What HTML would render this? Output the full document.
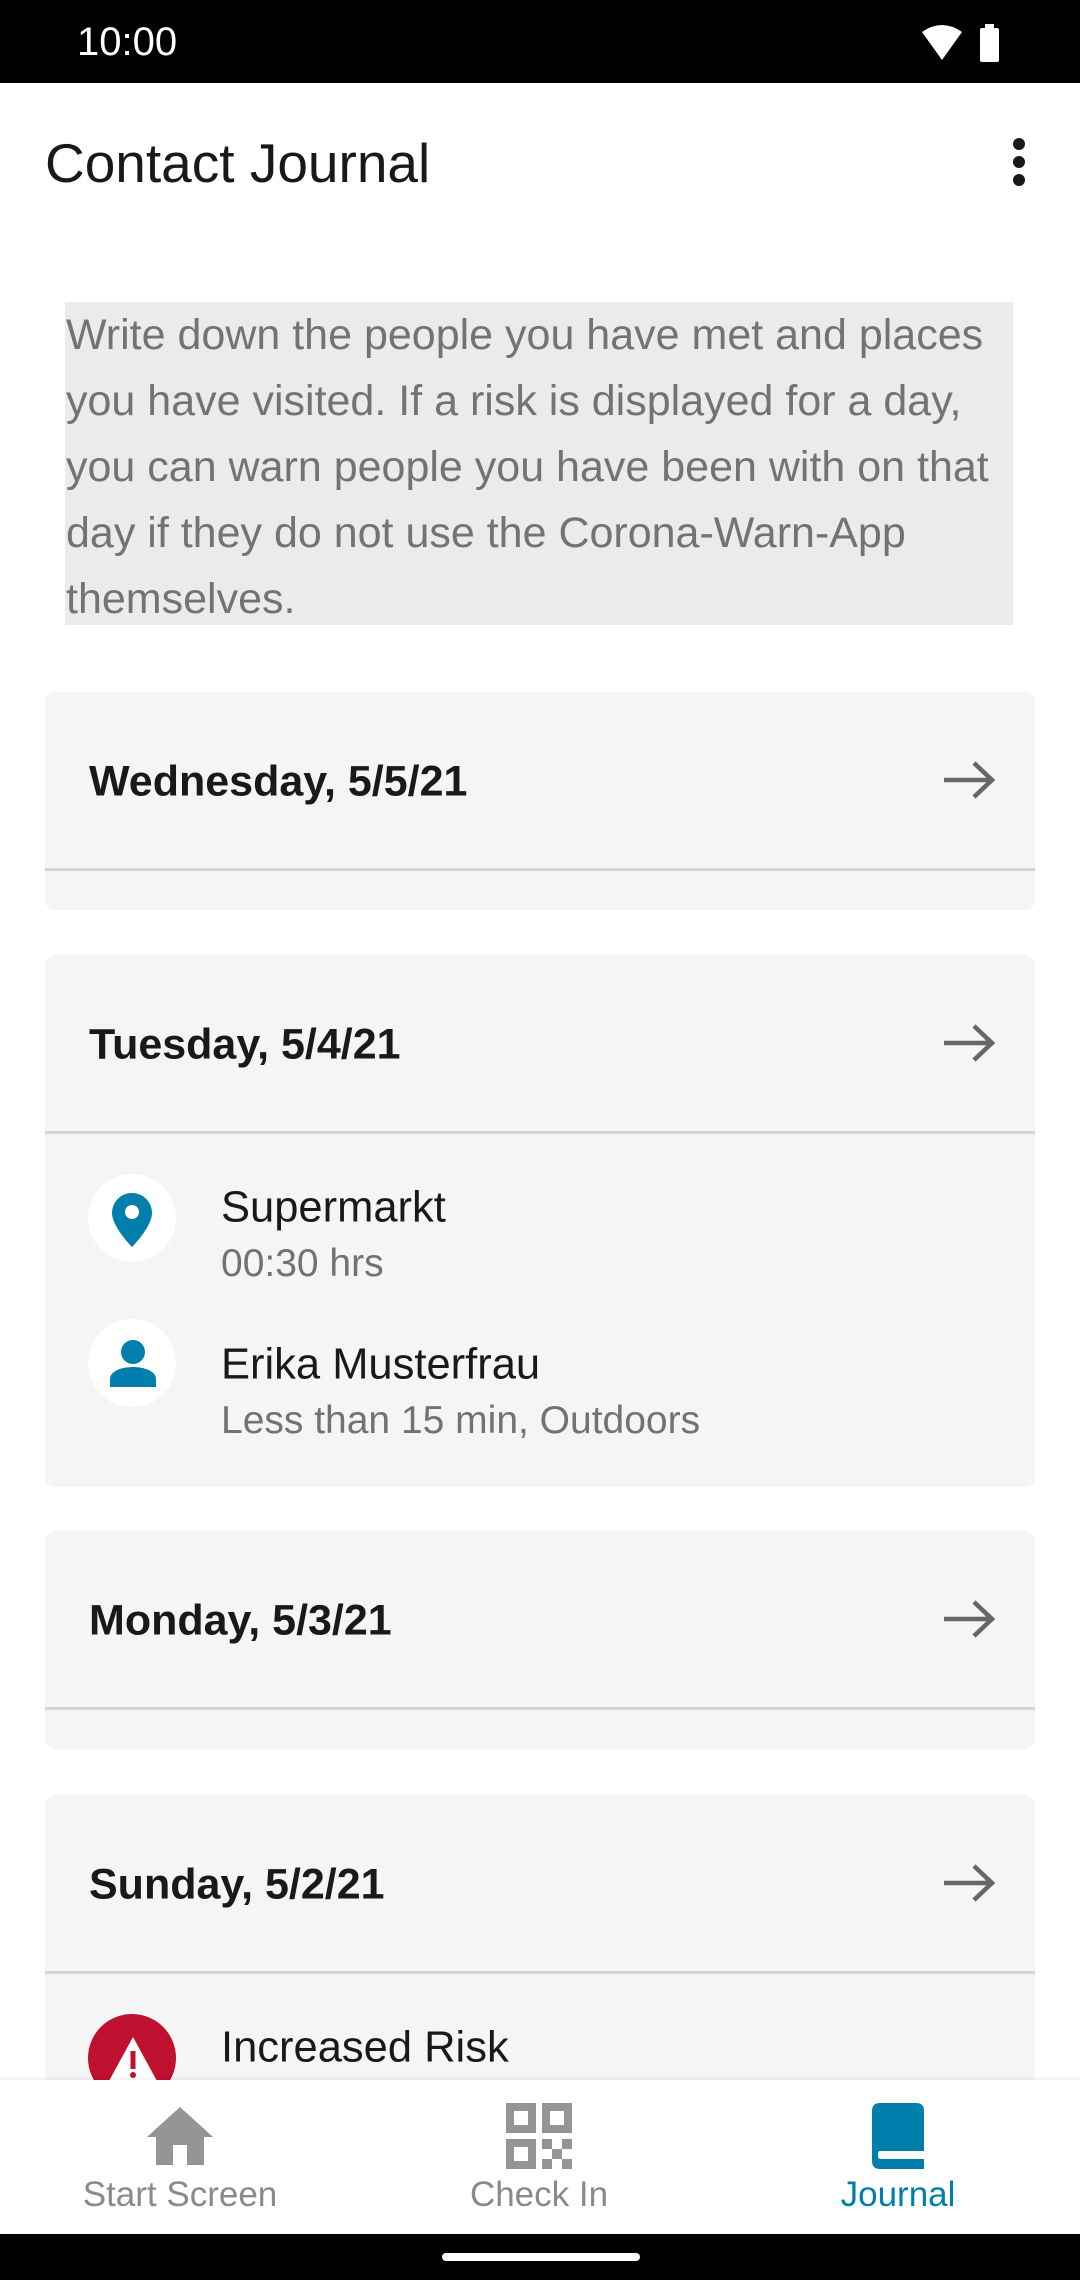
<!DOCTYPE html>
<html><head><meta charset="utf-8"><style>
*{margin:0;padding:0;box-sizing:border-box}
body{width:1080px;height:2280px;position:relative;overflow:hidden;background:#fff;font-family:"Liberation Sans",sans-serif;color:#17191a}
.a{position:absolute}
.card{position:absolute;left:45px;width:990px;background:#f5f5f5;border-radius:10px}
.hd{position:absolute;left:44px;font-weight:bold;font-size:43px;transform:translateY(-50%);white-space:nowrap}
.div{position:absolute;left:0;width:990px;height:3px;background:#d5d5d5}
.arr{position:absolute;left:897px;transform:translateY(-50%)}
.ic{position:absolute;left:43px;width:88px;height:88px;border-radius:50%;background:#fff}
.t1{position:absolute;left:176px;font-size:43.5px;transform:translateY(-50%);white-space:nowrap}
.t2{position:absolute;left:176px;font-size:39px;color:#727272;transform:translateY(-50%);white-space:nowrap}
.lab{position:absolute;font-size:35px;color:#8a8a8a;transform:translate(-50%,-50%);white-space:nowrap}
</style></head><body>
<div class="a" style="left:0;top:0;width:1080px;height:83px;background:#000"></div>
<div class="a" style="left:77px;top:20px;color:#fff;font-size:40px">10:00</div>
<svg class="a" style="left:922px;top:24px" width="80" height="40" viewBox="0 0 80 40"><path d="M0 8 Q20 -6 40 8 L20 36 Z" fill="#fff"/><rect x="58" y="4" width="19" height="34" rx="2" fill="#fff"/><rect x="63" y="0" width="9" height="6" fill="#fff"/></svg>
<div class="a" style="left:45px;top:131px;font-size:55px">Contact Journal</div>
<svg class="a" style="left:1008px;top:136px" width="22" height="52"><circle cx="11" cy="8" r="6" fill="#17191a"/><circle cx="11" cy="26" r="6" fill="#17191a"/><circle cx="11" cy="44" r="6" fill="#17191a"/></svg>
<div class="a" style="left:65px;top:302px;width:948px;height:323px;background:#ebebeb"></div>
<div class="a" style="left:66px;top:302px;width:1000px;font-size:43px;line-height:66px;color:#737373;white-space:nowrap">Write down the people you have met and places<br>you have visited. If a risk is displayed for a day,<br>you can warn people you have been with on that<br>day if they do not use the Corona-Warn-App<br>themselves.</div>

<div class="card" style="top:692px;height:218px">
<div class="hd" style="top:90px">Wednesday, 5/5/21</div>
<svg class="arr" style="top:88px" width="54" height="40" viewBox="0 0 54 40"><path d="M2 20H50M32 3L50 20L32 37" stroke="#666" stroke-width="4.5" fill="none"/></svg>
<div class="div" style="top:176px"></div></div>

<div class="card" style="top:955px;height:532px">
<div class="hd" style="top:90px">Tuesday, 5/4/21</div>
<svg class="arr" style="top:88px" width="54" height="40" viewBox="0 0 54 40"><path d="M2 20H50M32 3L50 20L32 37" stroke="#666" stroke-width="4.5" fill="none"/></svg>
<div class="div" style="top:176px"></div>
<div class="ic" style="top:219px"></div>
<svg class="a" style="left:67px;top:238px" width="40" height="54" viewBox="0 0 40 54"><path d="M20 0C9 0 0 9 0 20C0 34 20 54 20 54S40 34 40 20C40 9 31 0 20 0Z" fill="#007fad"/><circle cx="20" cy="19" r="7" fill="#fff"/></svg>
<div class="t1" style="top:253px">Supermarkt</div>
<div class="t2" style="top:309px">00:30 hrs</div>
<div class="ic" style="top:364px"></div>
<svg class="a" style="left:65px;top:384px" width="46" height="48" viewBox="0 0 46 48"><circle cx="23" cy="13" r="12" fill="#007fad"/><path d="M0 48V40C0 32 12 28 23 28S46 32 46 40V48Z" fill="#007fad"/></svg>
<div class="t1" style="top:410px">Erika Musterfrau</div>
<div class="t2" style="top:466px">Less than 15 min, Outdoors</div>
</div>

<div class="card" style="top:1531px;height:218px">
<div class="hd" style="top:90px">Monday, 5/3/21</div>
<svg class="arr" style="top:88px" width="54" height="40" viewBox="0 0 54 40"><path d="M2 20H50M32 3L50 20L32 37" stroke="#666" stroke-width="4.5" fill="none"/></svg>
<div class="div" style="top:176px"></div></div>

<div class="card" style="top:1795px;height:400px">
<div class="hd" style="top:90px">Sunday, 5/2/21</div>
<svg class="arr" style="top:88px" width="54" height="40" viewBox="0 0 54 40"><path d="M2 20H50M32 3L50 20L32 37" stroke="#666" stroke-width="4.5" fill="none"/></svg>
<div class="div" style="top:176px"></div>
<div class="ic" style="top:219px;background:#c0102f"></div>
<svg class="a" style="left:62px;top:240px" width="52" height="50" viewBox="0 0 52 50"><path d="M26 2L50 46H2Z" fill="#fff"/><rect x="23.5" y="16" width="5" height="18" fill="#c0102f"/><circle cx="26" cy="40" r="3" fill="#c0102f"/></svg>
<div class="t1" style="top:253px">Increased Risk</div>
</div>

<div class="a" style="left:0;top:2080px;width:1080px;height:154px;background:#fff;box-shadow:0 -2px 3px rgba(0,0,0,0.06)"></div>
<svg class="a" style="left:147px;top:2107px" width="66" height="58" viewBox="0 0 66 58"><path d="M33 0L66 30H57V58H40V38H26V58H9V30H0Z" fill="#959595"/></svg>
<div class="lab" style="left:180px;top:2195px">Start Screen</div>
<svg class="a" style="left:506px;top:2103px" width="66" height="66" viewBox="0 0 66 66"><g fill="none" stroke="#959595" stroke-width="8"><rect x="4" y="4" width="22" height="22"/><rect x="40" y="4" width="22" height="22"/><rect x="4" y="40" width="22" height="22"/></g><g fill="#959595"><rect x="36" y="36" width="10" height="10"/><rect x="56" y="36" width="10" height="10"/><rect x="46" y="46" width="10" height="10"/><rect x="36" y="56" width="10" height="10"/><rect x="56" y="56" width="10" height="10"/></g></svg>
<div class="lab" style="left:539px;top:2195px">Check In</div>
<svg class="a" style="left:872px;top:2103px" width="52" height="66" viewBox="0 0 52 66"><path d="M8 0H44Q52 0 52 8V66H8Q0 66 0 58V8Q0 0 8 0Z" fill="#007fad"/><path d="M8 48H52V56H8Q6 56 6 52Q6 48 8 48Z" fill="#fff"/></svg>
<div class="lab" style="left:898px;top:2195px;color:#007fad">Journal</div>
<div class="a" style="left:0;top:2234px;width:1080px;height:46px;background:#000"></div>
<div class="a" style="left:442px;top:2253px;width:198px;height:8px;border-radius:4px;background:#fff"></div>
</body></html>
